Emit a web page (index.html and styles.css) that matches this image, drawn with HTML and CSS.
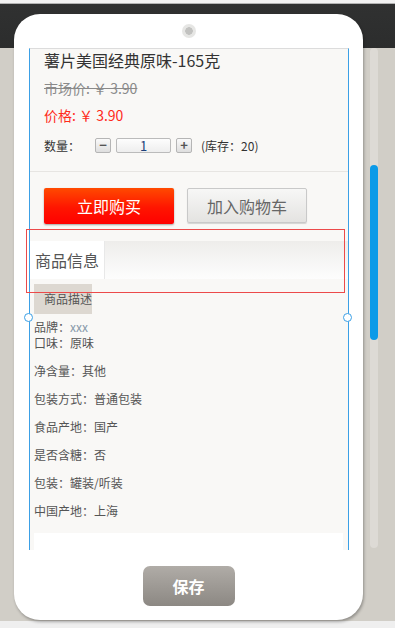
FILE: index.html
```html
<!DOCTYPE html>
<html lang="zh-CN">
<head>
    <meta charset="UTF-8">
    <meta name="viewport" content="width=device-width, initial-scale=1.0">
    <title>商品详情</title>
    <link rel="stylesheet" href="styles.css">
</head>
<body>
    <div class="stage">
        <!-- 手机框 -->
        <div class="phone">
            <div class="camera"><span></span></div>

            <div class="screen">
                <div class="info">
                    <h1 class="title">薯片美国经典原味-165克</h1>
                    <p class="market">市场价: ￥ 3.90</p>
                    <p class="price">价格: ￥ 3.90</p>
                    <div class="qty">
                        <span class="qty-label">数量：</span>
                        <button class="qty-btn">−</button>
                        <div class="qty-input">1</div>
                        <button class="qty-btn">+</button>
                        <span class="stock">(库存：20)</span>
                    </div>
                </div>

                <div class="actions">
                    <button class="buy">立即购买</button>
                    <button class="cart">加入购物车</button>
                </div>

                <div class="tabbar">
                    <div class="tab">商品信息</div>
                </div>

                <div class="desc-tab">商品描述</div>

                <div class="specs">
                    <p>品牌：<span class="brand">xxx</span><br>口味：原味</p>
                    <p>净含量：其他</p>
                    <p>包装方式：普通包装</p>
                    <p>食品产地：国产</p>
                    <p>是否含糖：否</p>
                    <p>包装：罐装/听装</p>
                    <p>中国产地：上海</p>
                </div>

                <div class="blank"></div>
            </div>

            <div class="footer">
                <button class="save">保存</button>
            </div>

            <!-- 选中框和控制点 -->
            <div class="select-box"></div>
            <div class="handle handle-left"></div>
            <div class="handle handle-right"></div>
        </div>

        <!-- 滚动条 -->
        <div class="scrollbar">
            <div class="thumb"></div>
        </div>
    </div>
</body>
</html>
```

FILE: styles.css
```css
body {
    margin: 0;
    height: 628px;
    overflow: hidden;
    font-family: "Noto Sans CJK SC", "Microsoft YaHei", sans-serif;
    background:
        linear-gradient(to top, #efefef 0, #efefef 7px, transparent 7px),
        linear-gradient(to bottom, #f2f2f2 0, #f2f2f2 3px, #b3b3b3 3px, #b3b3b3 4px, #303131 4px, #2c2d2d 48px, #d1cec7 48px);
}

p {
    margin: 0;
}

button {
    font-family: inherit;
    cursor: pointer;
}

.stage {
    display: flex;
    align-items: flex-start;
    padding: 14px 0 0 14px;
}

.phone {
    position: relative;
    width: 349px;
    height: 606px;
    background-color: #fff;
    border-radius: 26px;
    box-shadow: 1px 2px 3px rgba(0, 0, 0, 0.3);
    display: flex;
    flex-direction: column;
}

.camera {
    height: 34px;
    display: flex;
    justify-content: center;
    align-items: flex-start;
}

.camera span {
    margin-top: 10px;
    width: 14px;
    height: 14px;
    border-radius: 50%;
    background: radial-gradient(circle, #c2c2c0 0, #c2c2c0 3.5px, #e6e6e4 4px);
}

.screen {
    margin-left: 15px;
    width: 318px;
    height: 501px;
    border-top: 1px solid #dcdcdc;
    border-left: 1px solid #3ba0e6;
    border-right: 1px solid #3ba0e6;
    background-color: #f9f8f6;
    overflow: hidden;
}

.info {
    padding: 0 14px 16px;
    border-bottom: 1px solid #e7e5e2;
}

.title {
    margin: 0;
    font-size: 16px;
    font-weight: normal;
    line-height: 22px;
    color: #333;
}

.market {
    margin-top: 7px;
    font-size: 14px;
    line-height: 20px;
    color: #8a8a8a;
    text-decoration: line-through;
}

.price {
    margin-top: 7px;
    font-size: 14px;
    line-height: 20px;
    color: #ff2a1a;
}

.qty {
    margin-top: 10px;
    height: 20px;
    display: flex;
    align-items: center;
    font-size: 12px;
    color: #333;
}

.qty-label {
    width: 51px;
}

.qty-btn {
    width: 16px;
    height: 15px;
    padding: 0;
    border: 1px solid #b5b5b5;
    border-radius: 2px;
    background: linear-gradient(#fafafa, #dedede);
    font-size: 13px;
    font-weight: bold;
    line-height: 12px;
    color: #555;
}

.qty-input {
    margin: 0 5px;
    width: 53px;
    height: 13px;
    border: 1px solid #bbb;
    border-radius: 2px;
    background: linear-gradient(#fdfdfd, #eeeeee);
    text-align: center;
    font-size: 13px;
    line-height: 13px;
    color: #1d3f7a;
}

.stock {
    margin-left: 9px;
}

.actions {
    display: flex;
    align-items: flex-start;
    gap: 13px;
    padding: 16px 14px 0;
}

.buy {
    width: 130px;
    height: 36px;
    border: none;
    border-radius: 2px;
    background: linear-gradient(#ff4a00, #ff1500 55%, #ff0000);
    box-shadow: 0 1px 2px rgba(0, 0, 0, 0.35);
    font-size: 16px;
    color: #fff;
}

.cart {
    width: 120px;
    height: 35px;
    border: 1px solid #c9c9c9;
    border-radius: 2px;
    background: linear-gradient(#f7f7f6, #e4e3e1);
    box-shadow: 0 1px 1px rgba(0, 0, 0, 0.15);
    font-size: 16px;
    color: #666;
}

.tabbar {
    margin-top: 17px;
    height: 38px;
    display: flex;
    background: linear-gradient(#eeedeb, #fdfdfd);
}

.tab {
    width: 69px;
    padding-left: 5px;
    background-color: #fff;
    border-right: 1px solid #e8e8e8;
    font-size: 16px;
    line-height: 38px;
    color: #555;
}

.desc-tab {
    margin: 5px 0 0 4px;
    width: 48px;
    height: 30px;
    padding-left: 10px;
    background-color: #ddd8d1;
    font-size: 12px;
    line-height: 30px;
    color: #555;
}

.specs {
    margin-top: 5px;
    padding-left: 4px;
    font-size: 12px;
    line-height: 16px;
    color: #555;
}

.specs p {
    margin-bottom: 12px;
}

.brand {
    color: #8798aa;
}

.blank {
    margin: 14px 0 0 4px;
    width: 309px;
    height: 40px;
    background-color: #fff;
}

.footer {
    flex: 1;
    display: flex;
    justify-content: center;
}

.save {
    margin-top: 16px;
    width: 92px;
    height: 40px;
    border: none;
    border-radius: 7px;
    background: linear-gradient(#b0aca7, #8c8883);
    font-size: 16px;
    font-weight: bold;
    color: #fff;
}

.select-box {
    position: absolute;
    left: 12px;
    top: 215px;
    width: 317px;
    height: 62px;
    border: 1px solid #ec4a4a;
}

.handle {
    position: absolute;
    top: 299px;
    width: 7px;
    height: 7px;
    border: 1.5px solid #3ba0e6;
    border-radius: 50%;
    background-color: #fff;
}

.handle-left {
    left: 10px;
}

.handle-right {
    left: 329px;
}

.scrollbar {
    margin: 34px 0 0 7px;
    width: 8px;
    height: 500px;
    border-radius: 4px;
    background-color: #dddad5;
}

.thumb {
    margin-top: 117px;
    height: 175px;
    border-radius: 4px;
    background-color: #0b9ae8;
}
```
